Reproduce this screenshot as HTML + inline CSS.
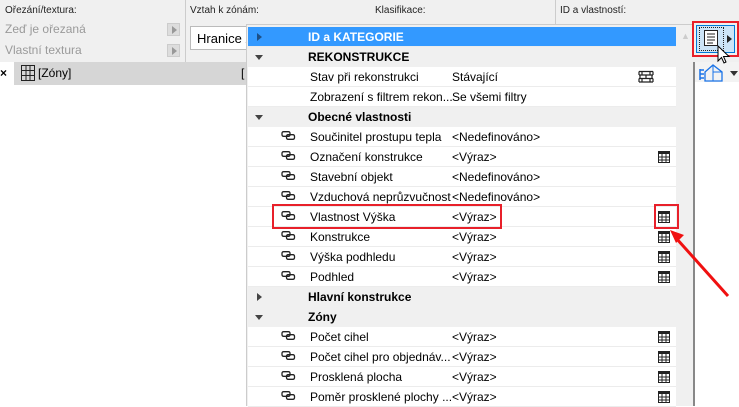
<!DOCTYPE html>
<html><head><meta charset="utf-8"><style>
*{margin:0;padding:0;box-sizing:border-box}
body{width:739px;height:406px;overflow:hidden;background:#fff;font-family:"Liberation Sans","DejaVu Sans",sans-serif;font-size:12px;color:#000;position:relative}
.a{position:absolute}
.top{left:0;top:0;width:739px;height:62px;background:#f0f0f0}
.lbl{font-size:10px;color:#222;top:5px}
.gr{color:#9a9a9a;font-size:12px}
.sbtn{width:13px;height:13px;background:#ddd;border:1px solid #ccc}
.sbtn:after{content:"";position:absolute;left:4px;top:2px;border-left:5px solid #999;border-top:4px solid transparent;border-bottom:4px solid transparent}
.row{position:absolute;left:248px;width:428px;height:20px;border-bottom:1px solid #ececec;background:#fff}
.row.h{background:#f0f0f0;font-weight:bold;border-bottom:1px solid #f0f0f0}
.row.sel{background:#3399ff;color:#fff;font-weight:bold}
.row .n{position:absolute;left:62px;top:3px;white-space:nowrap}
.row.h .n,.row.sel .n{left:60px}
.row .v{position:absolute;left:204px;top:3px;white-space:nowrap}
.tri-r{position:absolute;left:9px;top:6px;border-left:5px solid #444;border-top:4px solid transparent;border-bottom:4px solid transparent}
.sel .tri-r{border-left-color:#1d4f86}
.tri-d{position:absolute;left:7px;top:8px;border-top:5px solid #444;border-left:4px solid transparent;border-right:4px solid transparent}
.lk{position:absolute;left:33px;top:4px}
.calc{position:absolute;left:410px;top:4px}
</style></head><body>
<div class="a top"></div>
<div class="a" style="left:185px;top:0;width:1px;height:62px;background:#ccc"></div>
<div class="a" style="left:555px;top:0;width:1px;height:25px;background:#ccc"></div>
<div class="a lbl" style="left:5px">Ořezání/textura:</div>
<div class="a lbl" style="left:190px">Vztah k zónám:</div>
<div class="a lbl" style="left:375px">Klasifikace:</div>
<div class="a lbl" style="left:560px">ID a vlastností:</div>
<div class="a gr" style="left:5px;top:22px">Zeď je ořezaná</div>
<div class="a gr" style="left:5px;top:43px">Vlastní textura</div>
<div class="a sbtn" style="left:167px;top:23px"></div>
<div class="a sbtn" style="left:167px;top:44px"></div>
<div class="a" style="left:190px;top:26px;width:60px;height:24px;background:#fff;border:1px solid #bbb"></div>
<div class="a" style="left:197px;top:31px;font-size:13px">Hranice z</div>
<div class="a" style="left:14px;top:62px;width:234px;height:23px;background:#d6d6d6"></div>
<div class="a" style="left:0;top:66px;font-size:12px;font-weight:bold">×</div>
<svg class="a" style="left:21px;top:65px" width="14" height="16"><rect x="0.5" y="0.5" width="13" height="15" fill="none" stroke="#222"/><path d="M5 0v16M9 0v16M0 5.5h14M0 10.5h14" stroke="#222"/></svg>
<div class="a" style="left:38px;top:66px;font-size:12px">[Zóny]</div>
<div class="a" style="left:241px;top:66px;font-size:12px">[</div>
<div class="a" style="left:246px;top:24px;width:448px;height:382px;background:#f0f0f0;border-left:1px solid #ccc;border-top:1px solid #ccc"></div>
<div class="a" style="left:693px;top:62px;width:2px;height:344px;background:#888"></div>
<div class="a" style="left:681px;top:31px;color:#ccc;font-size:9px">▲</div>
<div class="a" style="left:695px;top:62px;width:44px;height:344px;background:#fff"></div>
<div class="a" style="left:695px;top:62px;width:44px;height:20px;background:#f3f3f3"></div>
<div class="row sel" style="top:27px"><i class="tri-r"></i><span class="n">ID a KATEGORIE</span></div>
<div class="row h" style="top:47px"><i class="tri-d"></i><span class="n">REKONSTRUKCE</span></div>
<div class="row" style="top:67px"><span class="n">Stav při rekonstrukci</span><span class="v">Stávající</span>
<svg class="a" style="left:390px;top:3px" width="16" height="14"><path d="M1 1.5h14M1 5h14M1 8.5h14M1 12h14M4 1.5v3.5M12 1.5v3.5M2 5v3.5M8 5v3.5M14 5v3.5M4 8.5v3.5M12 8.5v3.5M1 1.5v3.5M15 1.5v3.5M1 8.5v3.5M15 8.5v3.5" fill="none" stroke="#222" stroke-width="1.2"/></svg></div>
<div class="row" style="top:87px"><span class="n">Zobrazení s filtrem rekon...</span><span class="v">Se všemi filtry</span></div>
<div class="row h" style="top:107px"><i class="tri-d"></i><span class="n">Obecné vlastnosti</span></div>
<div id="rows"></div>
<div class="row h" style="top:287px"><i class="tri-r"></i><span class="n">Hlavní konstrukce</span></div>
<div class="row h" style="top:307px"><i class="tri-d"></i><span class="n">Zóny</span></div>
<script>
var L='<svg class="lk" width="15" height="9"><rect x="1" y="0.7" width="8" height="4.6" rx="1.5" fill="none" stroke="#222" stroke-width="1.3"/><rect x="5.5" y="3.7" width="8" height="4.6" rx="1.5" fill="none" stroke="#222" stroke-width="1.3"/></svg>';
var C='<svg class="calc" width="12" height="12"><rect x="0.5" y="0.5" width="11" height="11" fill="#fff" stroke="#222"/><rect x="0" y="0" width="12" height="3" fill="#222"/><path d="M0 6h12M0 9h12M4 3v9M8 3v9" stroke="#222"/></svg>';
var d=[[127,'Součinitel prostupu tepla','<Nedefinováno>',0],[147,'Označení konstrukce','<Výraz>',1],[167,'Stavební objekt','<Nedefinováno>',0],[187,'Vzduchová neprůzvučnost','<Nedefinováno>',0],[207,'Vlastnost Výška','<Výraz>',1],[227,'Konstrukce','<Výraz>',1],[247,'Výška podhledu','<Výraz>',1],[267,'Podhled','<Výraz>',1],[327,'Počet cihel','<Výraz>',1],[347,'Počet cihel pro objednáv...','<Výraz>',1],[367,'Prosklená plocha','<Výraz>',1],[387,'Poměr prosklené plochy ...','<Výraz>',1]];
var h='';d.forEach(function(r){h+='<div class="row" style="top:'+r[0]+'px">'+L+'<span class="n"></span><span class="v"></span>'+(r[3]?C:'')+'</div>';});
var c=document.getElementById('rows');c.outerHTML=h;
var rs=document.querySelectorAll('.row');
rs.forEach(function(e){var t=parseInt(e.style.top);d.forEach(function(r){if(r[0]==t&&e.querySelector('.lk')){e.querySelector('.n').textContent=r[1];e.querySelector('.v').textContent=r[2];}});});
</script>
<div class="a" style="left:692px;top:21px;width:47px;height:36px;border:2px solid #e8202a"></div>
<div class="a" style="left:696px;top:25px;width:39px;height:28px;background:#cce4f7;border:1px solid #0078d7"></div>
<div class="a" style="left:699px;top:27px;width:25px;height:24px;border:1px dotted #222"></div>
<svg class="a" style="left:704px;top:30px" width="14" height="16"><rect x="0.5" y="0.5" width="13" height="15" fill="#fff" stroke="#222"/><path d="M3 4h8M3 7h8M3 10h8M3 13h6" stroke="#222"/></svg>
<div class="a" style="left:727px;top:35px;border-left:5px solid #222;border-top:4px solid transparent;border-bottom:4px solid transparent"></div>
<svg class="a" style="left:717px;top:45px" width="14" height="20"><path d="M1 1v15l3.5-3.5 2.5 5.5 2-1-2.5-5.5H12z" fill="#fff" stroke="#000"/></svg>
<svg class="a" style="left:697px;top:64px" width="30" height="18"><path d="M8 8l8-7 9 7v9H8z" fill="none" stroke="#1a73e8" stroke-width="1.3"/><path d="M16 1v16M16 8h9" stroke="#1a73e8"/><path d="M3 5v11M3 6h4M3 10h4M3 14h4" stroke="#1a73e8" stroke-width="1.5"/></svg>
<div class="a" style="left:730px;top:71px;border-top:5px solid #333;border-left:4px solid transparent;border-right:4px solid transparent"></div>
<div class="a" style="left:272px;top:204px;width:230px;height:25px;border:2px solid #e8202a"></div>
<div class="a" style="left:654px;top:204px;width:25px;height:25px;border:2px solid #e8202a"></div>
<svg class="a" style="left:660px;top:225px" width="79" height="80"><path d="M68 71L16 13" stroke="#f01010" stroke-width="3"/><path d="M10 5l14 5-8 8z" fill="#f01010"/></svg>
</body></html>
